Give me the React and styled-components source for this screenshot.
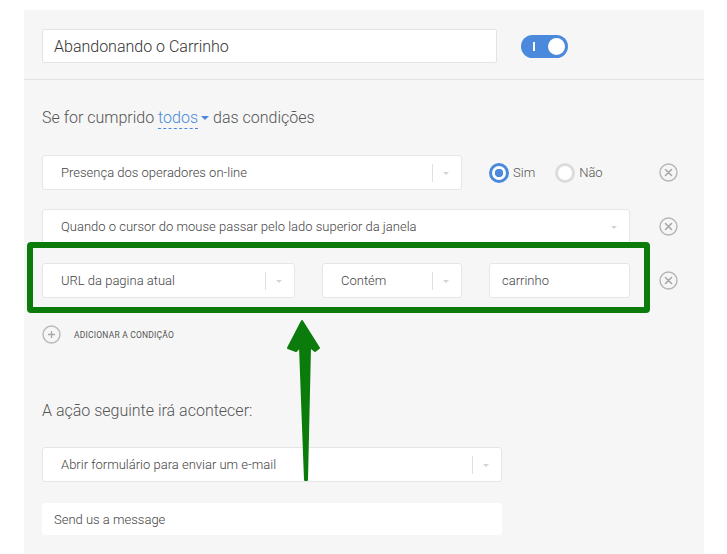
import React from 'react';
import styled, { createGlobalStyle } from 'styled-components';

const GlobalStyle = createGlobalStyle`
  body {
    margin: 0;
    background: #fff;
    font-family: Roboto, "Liberation Sans", Arial, sans-serif;
    color: #444;
  }
`;

const Page = styled.div`
  padding: 10px 23px 0 24px;
  height: 544px;
  overflow: hidden;
`;

const Panel = styled.div`
  position: relative;
  background: #f6f6f6;
  width: 680px;
  height: 544px;
`;

const Header = styled.div`
  display: flex;
  align-items: center;
  padding: 19px 18px 16px;
  border-bottom: 1px solid #e2e2e2;
`;

const NameInput = styled.div`
  box-sizing: border-box;
  width: 455px;
  height: 34px;
  background: #fff;
  border: 1px solid #e4e4e4;
  border-radius: 2px;
  display: flex;
  align-items: center;
  padding-left: 11px;
  font-size: 16px;
  font-weight: 300;
  color: #333;
`;

const Toggle = styled.div`
  position: relative;
  margin-left: 24px;
  width: 47px;
  height: 23px;
  border-radius: 12px;
  background: #4a89dc;

  /* marca "I" do estado ligado */
  &::before {
    content: '';
    position: absolute;
    left: 12px;
    top: 7px;
    width: 1.5px;
    height: 9px;
    background: #fff;
  }
`;

const Knob = styled.span`
  position: absolute;
  right: 1px;
  top: 1px;
  box-sizing: border-box;
  width: 21px;
  height: 21px;
  border-radius: 50%;
  background: #fff;
  border: 2px solid #4a89dc;
`;

const Body = styled.div`
  padding: 0 18px;
`;

const Heading = styled.div`
  font-size: 16px;
  line-height: 20px;
  font-weight: 300;
  color: #555;
  margin-top: ${p => p.$top}px;
  margin-bottom: ${p => p.$bottom || 27}px;
`;

const Quantifier = styled.span`
  color: #4a89dc;
  border-bottom: 1px dashed #4a89dc;
  padding-bottom: 1px;
`;

const Caret = styled.span`
  display: inline-block;
  width: 0;
  height: 0;
  margin: 0 4px 2px 3px;
  border-left: 4px solid transparent;
  border-right: 4px solid transparent;
  border-top: 4px solid #4a89dc;
  vertical-align: middle;
`;

const Rows = styled.div`
  display: flex;
  flex-direction: column;
  gap: 19px;
`;

const Row = styled.div`
  position: relative;
  display: flex;
  align-items: center;
`;

const Fields = styled.div`
  display: flex;
  align-items: center;
  width: 588px;
`;

const Select = styled.div`
  box-sizing: border-box;
  position: relative;
  width: ${p => p.$w}px;
  margin-left: ${p => p.$ml || 0}px;
  height: 35px;
  background: #fff;
  border: 1px solid #e6e6e6;
  border-radius: 3px;
  display: flex;
  align-items: center;
  padding-left: 18px;
  font-size: 13px;
  color: #444;
  font-weight: 300;
`;

const Divider = styled.span`
  position: absolute;
  right: 28px;
  top: 8px;
  width: 1px;
  height: 18px;
  background: #e0e0e0;
`;

const SmallCaret = styled.span`
  position: absolute;
  right: 12px;
  top: 16px;
  border-left: 3px solid transparent;
  border-right: 3px solid transparent;
  border-top: 3px solid #d4d4d4;
`;

const TextBox = styled.div`
  box-sizing: border-box;
  width: ${p => p.$w}px;
  margin-left: ${p => p.$ml || 0}px;
  height: ${p => p.$h || 35}px;
  background: #fff;
  border: 1px solid ${p => (p.$flat ? '#fff' : '#e6e6e6')};
  border-radius: 3px;
  display: flex;
  align-items: center;
  padding-left: ${p => p.$pl || 12}px;
  font-size: 13px;
  font-weight: 300;
  color: #444;
`;

const RadioGroup = styled.div`
  display: flex;
  align-items: center;
  margin-left: 27px;
  gap: 20px;
`;

const RadioLabel = styled.label`
  display: flex;
  align-items: center;
  gap: 4px;
  font-size: 13px;
  font-weight: 300;
  color: #555;
`;

const RadioCircle = styled.span`
  box-sizing: border-box;
  width: 20px;
  height: 20px;
  border-radius: 50%;
  border: 3px solid ${p => (p.$on ? '#4a89dc' : '#dcdcdc')};
  background: ${p => (p.$on ? 'radial-gradient(circle, #4a89dc 0 4px, #fff 4.5px)' : '#fff')};
`;

const CloseBtn = styled.span`
  position: absolute;
  left: 617px;
  top: 8px;
  width: 19px;
  height: 19px;
  display: flex;
`;

const AddRow = styled.div`
  display: flex;
  align-items: center;
  gap: 13px;
  margin-top: 27px;
  font-size: 8.5px;
  letter-spacing: 0.2px;
  color: #555;
  text-transform: uppercase;
`;

const Highlight = styled.div`
  position: absolute;
  left: -15px;
  top: -21px;
  width: 623px;
  height: 71px;
  box-sizing: border-box;
  border: 6px solid #0b7b0b;
  border-radius: 4px;
  pointer-events: none;
`;

const ArrowSvg = styled.svg`
  position: absolute;
  left: 0;
  top: 0;
  pointer-events: none;
`;

const ActionBlock = styled.div`
  display: flex;
  flex-direction: column;
  gap: 21px;
`;

const CloseIcon = () => (
  <svg width="19" height="19" viewBox="0 0 19 19">
    <circle cx="9.5" cy="9.5" r="8.5" fill="none" stroke="#b5b5b5" strokeWidth="1.4" />
    <path d="M6.5 6.5 L12.5 12.5 M12.5 6.5 L6.5 12.5" stroke="#a8a8a8" strokeWidth="1.6" strokeLinecap="round" />
  </svg>
);

const PlusIcon = () => (
  <svg width="19" height="19" viewBox="0 0 19 19">
    <circle cx="9.5" cy="9.5" r="8.5" fill="none" stroke="#b8b8b8" strokeWidth="1.4" />
    <path d="M9.5 6 V13 M6 9.5 H13" stroke="#a8a8a8" strokeWidth="1.3" />
  </svg>
);

const App = () => {
  return (
    <Page>
      <GlobalStyle />
      <Panel>
        <Header>
          <NameInput>Abandonando o Carrinho</NameInput>
          <Toggle>
            <Knob />
          </Toggle>
        </Header>

        <Body>
          <Heading $top={28}>
            Se for cumprido <Quantifier>todos</Quantifier>
            <Caret />das condições
          </Heading>

          <Rows>
            <Row>
              <Select $w={420}>
                Presença dos operadores on-line
                <Divider />
                <SmallCaret />
              </Select>
              <RadioGroup>
                <RadioLabel><RadioCircle $on />Sim</RadioLabel>
                <RadioLabel><RadioCircle />Não</RadioLabel>
              </RadioGroup>
              <CloseBtn><CloseIcon /></CloseBtn>
            </Row>

            <Row>
              <Fields>
                <Select $w={588}>
                  Quando o cursor do mouse passar pelo lado superior da janela
                  <SmallCaret />
                </Select>
              </Fields>
              <CloseBtn><CloseIcon /></CloseBtn>
            </Row>

            <Row>
              <Fields>
                <Select $w={253}>
                  URL da pagina atual
                  <Divider />
                  <SmallCaret />
                </Select>
                <Select $w={140} $ml={27}>
                  Contém
                  <Divider />
                  <SmallCaret />
                </Select>
                <TextBox $w={141} $ml={27}>carrinho</TextBox>
              </Fields>
              <CloseBtn><CloseIcon /></CloseBtn>
              <Highlight />
            </Row>
          </Rows>

          <AddRow>
            <PlusIcon />
            Adicionar a condição
          </AddRow>

          <Heading $top={57} $bottom={26}>A ação seguinte irá acontecer:</Heading>

          <ActionBlock>
            <Select $w={460}>
              Abrir formulário para enviar um e-mail
              <Divider />
              <SmallCaret />
            </Select>
            <TextBox $w={460} $h={32} $pl={11} $flat>Send us a message</TextBox>
          </ActionBlock>
        </Body>

        {/* seta verde de anotação */}
        <ArrowSvg width="680" height="544" viewBox="0 0 680 544">
          <path
            d="M278 311 L264 338 L272 341 L276 337 L281 470 L283 470 L286 337 L291 341 L295 338 Z"
            fill="#0b7b0b"
            stroke="#0b7b0b"
            strokeWidth="2"
            strokeLinejoin="round"
          />
        </ArrowSvg>
      </Panel>
    </Page>
  );
};

export default App;
